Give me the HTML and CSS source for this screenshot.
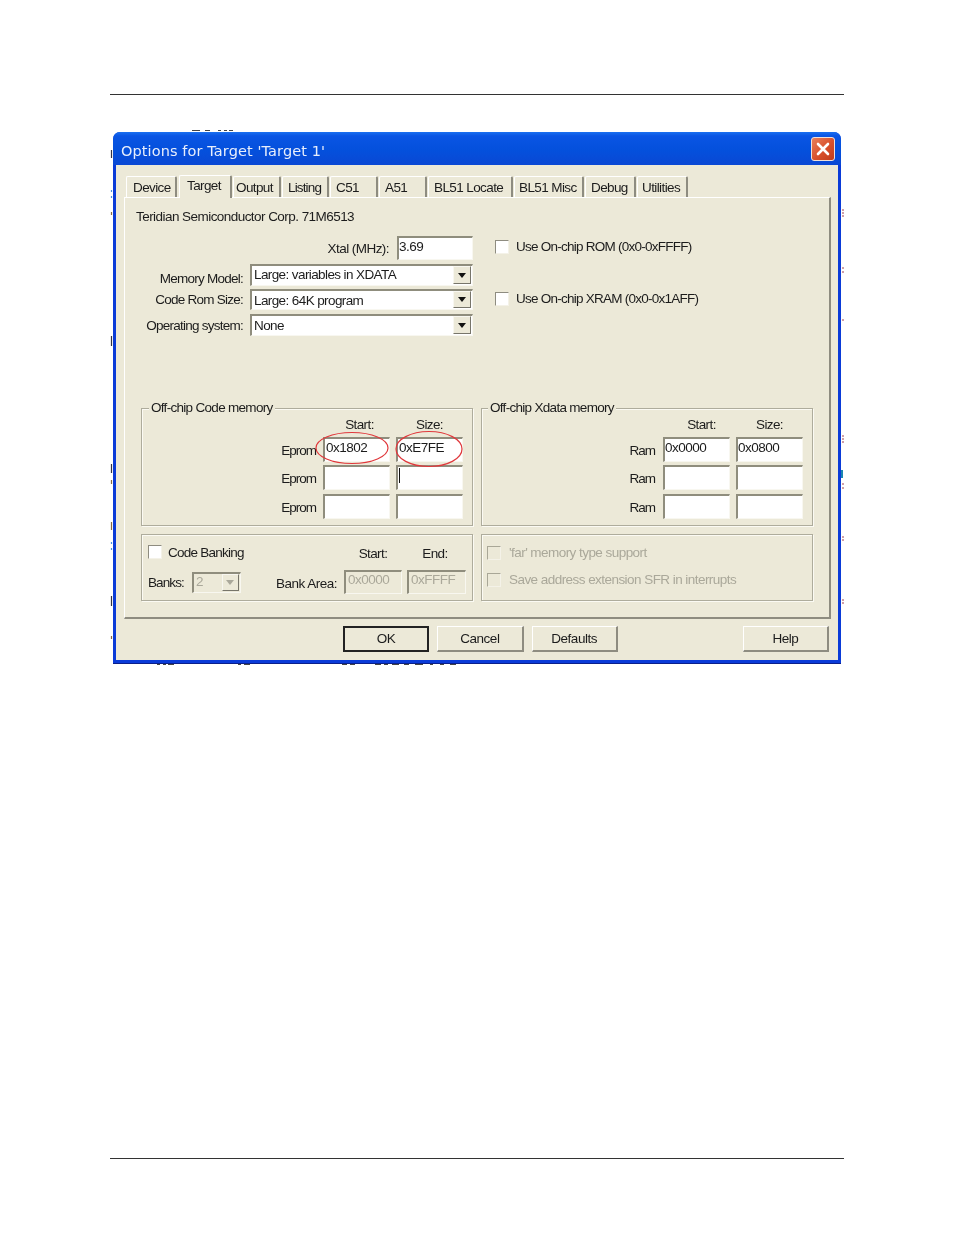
FILE: index.html
```html
<!DOCTYPE html>
<html lang="en">
<head>
<meta charset="utf-8">
<title>Options for Target</title>
<link rel="stylesheet" href="styles.css">
</head>
<body>
<div class="page">
  <div class="rule"></div>
  <svg class="specks" width="954" height="700" viewBox="0 0 954 700">
    <path d="M192 130.5h8M205 130.5h5M218 130.5h3M224 130.5h3M229 130.5h4M157 664.5h3M163 664.5h3M168 664.5h6M238 664.5h3M244 664.5h6M342 664.5h5M350 664.5h5M375 664.5h6M384 664.5h4M392 664.5h7M404 664.5h5M415 664.5h8M430 664.5h3M440 664.5h4M450 664.5h6" stroke="#444" stroke-width="1.2" fill="none"/>
    <path d="M111.500 150v8M111.500 336v10M111.500 596v10M111.500 464v9" stroke="#334" stroke-width="1.200" fill="none"/>
    <path d="M111.500 212v3M111.500 480v4M111.500 522v8M111.500 636v3" stroke="#8a6a40" stroke-width="1.200" fill="none"/>
    <path d="M111.500 190v2M111.500 196v2M111.500 542v2M111.500 548v2" stroke="#4a90e0" stroke-width="1.200" fill="none"/>
    <path d="M842 210h2M842 213h2M842 216h2M842 268h2M842 272h2M842 320h2M842 436h2M842 439h2M842 442h2M842 484h2M842 488h2M842 537h2M842 540h2M842 600h2M842 603h2" stroke="#a04050" stroke-width="1" fill="none"/>
    <path d="M842 470v8" stroke="#1a86b0" stroke-width="2" fill="none"/>
  </svg>
  <div class="dialog">
    <div class="titlebar">
      <span class="title">Options for Target 'Target 1'</span>
      <span class="close"><svg width="18" height="18" viewBox="0 0 18 18"><path d="M4 4L14 14M14 4L4 14" stroke="#fff" stroke-width="2.6" stroke-linecap="round"/></svg></span>
    </div>
    <div class="client">
      <div class="tabs">
        <span class="tab w-device">Device</span>
        <span class="tab active w-target">Target</span>
        <span class="tab w-output">Output</span>
        <span class="tab w-listing">Listing</span>
        <span class="tab w-c51">C51</span>
        <span class="tab w-a51">A51</span>
        <span class="tab w-locate">BL51 Locate</span>
        <span class="tab w-misc">BL51 Misc</span>
        <span class="tab w-debug">Debug</span>
        <span class="tab w-util">Utilities</span>
      </div>
      <div class="panel">
        <div class="device">Teridian Semiconductor Corp. 71M6513</div>
        <div class="top">
          <div class="top-left">
            <div class="row row-xtal"><label class="lab lab-xtal">Xtal (MHz):</label><div class="edit edit-xtal">3.69</div></div>
            <div class="row row-mem"><label class="lab lab-mem">Memory Model:</label><div class="combo">Large: variables in XDATA<span class="drop"><i></i></span></div></div>
            <div class="row row-rom"><label class="lab">Code Rom Size:</label><div class="combo combo-low">Large: 64K program<span class="drop"><i></i></span></div></div>
            <div class="row row-os"><label class="lab">Operating system:</label><div class="combo combo-low">None<span class="drop"><i></i></span></div></div>
          </div>
          <div class="top-right">
            <div class="check"><span class="box"></span>Use On-chip ROM (0x0-0xFFFF)</div>
            <div class="check check-2"><span class="box"></span>Use On-chip XRAM (0x0-0x1AFF)</div>
          </div>
        </div>
        <div class="groups">
          <div class="group mem-group">
            <span class="legend">Off-chip Code memory</span>
            <span></span><span class="head head-start">Start:</span><span class="head">Size:</span>
            <span class="rowlab">Eprom</span><div class="edit">0x1802</div><div class="edit">0xE7FE</div>
            <span class="rowlab">Eprom</span><div class="edit"></div><div class="edit"><span class="caret"></span></div>
            <span class="rowlab">Eprom</span><div class="edit"></div><div class="edit"></div>
            <svg class="marks" width="160" height="44" viewBox="0 0 160 44"><ellipse cx="37" cy="20" rx="36" ry="15.5" fill="none" stroke="#e0383c" stroke-width="1.2"/><ellipse cx="114" cy="21" rx="33" ry="17.500" fill="none" stroke="#e0383c" stroke-width="1.2"/></svg>
          </div>
          <div class="group mem-group xdata">
            <span class="legend">Off-chip Xdata memory</span>
            <span></span><span class="head head-start">Start:</span><span class="head">Size:</span>
            <span class="rowlab">Ram</span><div class="edit">0x0000</div><div class="edit">0x0800</div>
            <span class="rowlab">Ram</span><div class="edit"></div><div class="edit"></div>
            <span class="rowlab">Ram</span><div class="edit"></div><div class="edit"></div>
          </div>
          <div class="group bank-group">
            <div class="check bank-check"><span class="box"></span>Code Banking</div>
            <span></span>
            <span class="head head-low">Start:</span><span class="head head-low head-end">End:</span>
            <div class="banks">Banks:<div class="combo combo-off">2<span class="drop"><i></i></span></div></div>
            <span class="bank-area">Bank Area:</span>
            <div class="edit edit-off">0x0000</div><div class="edit edit-off edit-end">0xFFFF</div>
          </div>
          <div class="group far-group">
            <div class="check off"><span class="box box-off"></span>'far' memory type support</div>
            <div class="check off"><span class="box box-off"></span>Save address extension SFR in interrupts</div>
          </div>
        </div>
      </div>
      <div class="buttons">
        <button class="btn default">OK</button>
        <button class="btn">Cancel</button>
        <button class="btn">Defaults</button>
        <button class="btn help">Help</button>
      </div>
    </div>
  </div>
  <div class="rule rule-bottom"></div>
</div>
</body>
</html>
```
FILE: styles.css
```css
* { box-sizing: border-box; }
html, body { margin: 0; padding: 0; background: #fff; }
body { font-family: "Liberation Sans", Arial, sans-serif; font-size: 13.5px; color: #1c1c1c; }
.page { width: 954px; height: 1235px; padding: 94px 110px 0; position: relative; }
.rule { height: 1px; background: #333; }
.rule-bottom { margin-top: 494px; }
.specks { position: absolute; left: 0; top: 0; }

.dialog { width: 728px; height: 532px; margin: 37px 0 0 3px; border-radius: 7px 7px 0 0; overflow: hidden; background: #0a3bd8; padding: 0 3px 3px; border-bottom: 1px solid #0a1f8a; filter: blur(0.4px); position: relative; }
.titlebar { height: 33px; margin: 0 -3px; padding: 0 6px 0 8px; display: flex; align-items: center; justify-content: space-between; background: linear-gradient(#1a70f0 0, #0a55e4 12%, #0450dc 55%, #0a48d4 100%); }
.title { font-family: "DejaVu Sans", sans-serif; font-size: 14.5px; color: #e8eefc; letter-spacing: 0.1px; padding-top: 4px; }
.close { width: 24px; height: 24px; border-radius: 3px; border: 1px solid #f0e0d8; background: linear-gradient(135deg, #e8805c, #d8502c 55%, #c03c1c); display: flex; align-items: center; justify-content: center; }

.client { height: 495px; background: #ece9d8; padding: 10px 9px 0 8px; }
.tabs { display: flex; height: 22px; padding-left: 2px; align-items: flex-end; }
.tab { height: 21px; flex: none; padding: 3px 0 0 6px; background: #ece9d8; border-top: 1px solid #fff; border-left: 1px solid #fff; border-right: 2px solid #8e8c80; border-radius: 2px 2px 0 0; margin-right: 1px; white-space: nowrap; letter-spacing: -0.6px; }
.active { height: 23px; padding-top: 2px; margin-bottom: -1px; position: relative; z-index: 1; padding-left: 7px; }
.w-device { width: 51px; margin-right: 2px; }
.w-target { width: 53px; }
.w-output { width: 48px; padding-left: 2px; }
.w-listing { width: 47px; margin-right: 1px; padding-left: 5px; letter-spacing: -0.85px; }
.w-c51 { width: 48px; padding-left: 5px; }
.w-a51 { width: 48px; padding-left: 5px; }
.w-locate { width: 85px; padding-left: 5px; }
.w-misc { width: 70px; padding-left: 4px; }
.w-debug { width: 51px; padding-left: 5px; }
.w-util { width: 51px; padding-left: 4px; }

.panel { height: 422px; width: 707px; border-top: 1px solid #fff; border-left: 1px solid #fff; border-right: 2px solid #8e8c80; border-bottom: 2px solid #8e8c80; padding: 10px 0 0 11px; }
.device { height: 17px; line-height: 17px; letter-spacing: -0.55px; }

.top { display: flex; height: 172px; margin-top: 11px; }
.top-left { width: 337px; display: flex; flex-direction: column; }
.row { display: flex; justify-content: flex-end; align-items: center; gap: 7px; height: 22px; margin-bottom: 3px; }
.row-xtal { height: 24px; margin-bottom: 4px; gap: 8px; }
.row-rom { height: 21px; margin-bottom: 4px; }
.lab { letter-spacing: -0.75px; white-space: nowrap; }
.lab-xtal { padding-top: 1px; letter-spacing: -0.55px; }
.lab-mem { padding-top: 6px; }
.top-right { margin-left: 22px; display: flex; flex-direction: column; padding-top: 2px; }
.check { display: flex; align-items: center; gap: 7px; height: 17px; letter-spacing: -0.75px; white-space: nowrap; }
.check-2 { margin-top: 35px; }
.box { width: 14px; height: 14px; flex: none; background: #fff; border-top: 1px solid #8e8c80; border-left: 1px solid #8e8c80; border-right: 1px solid #f4f2e8; border-bottom: 1px solid #f4f2e8; }
.box-off { background: #ece9d8; }

.edit { height: 25px; background: #fff; border-top: 2px solid #8f8d7d; border-left: 2px solid #8f8d7d; border-right: 1px solid #f8f7f0; border-bottom: 1px solid #f8f7f0; padding-left: 1px; line-height: 18px; letter-spacing: -0.5px; position: relative; }
.edit-xtal { width: 76px; height: 24px; padding-left: 0; }
.xdata .edit { padding-left: 0; }
.caret { display: block; width: 1px; height: 15px; margin-top: 1px; background: #111; }
.combo { width: 223px; height: 100%; background: #fff; border-top: 2px solid #8f8d7d; border-left: 2px solid #8f8d7d; border-right: 1px solid #f8f7f0; border-bottom: 1px solid #f8f7f0; padding-left: 2px; line-height: 18px; letter-spacing: -0.6px; display: flex; justify-content: space-between; white-space: nowrap; }
.combo-low { line-height: 20px; }
.drop { width: 18px; margin: 0 1px 1px 0; flex: none; background: #ece9d8; border-top: 1px solid #f8f7f0; border-left: 1px solid #f8f7f0; border-right: 1px solid #77756a; border-bottom: 1px solid #77756a; display: flex; align-items: center; justify-content: center; }
.drop i { width: 0; height: 0; border-left: 4.5px solid transparent; border-right: 4.5px solid transparent; border-top: 5px solid #111; }

.groups { display: grid; grid-template-columns: 332px 332px; column-gap: 8px; row-gap: 8px; margin-left: 5px; }
.group { border: 1px solid #aeac9c; box-shadow: 1px 1px 0 #fbfaf3, inset 1px 1px 0 #fbfaf3; position: relative; }
.legend { position: absolute; left: 7px; top: -9px; padding: 0 2px; background: #ece9d8; line-height: 16px; letter-spacing: -0.7px; white-space: nowrap; }
.xdata .legend { left: 6px; }
.mem-group { height: 118px; display: grid; grid-template-columns: 1fr 67px 67px; grid-template-rows: 17px 25px 25px 25px; column-gap: 6px; row-gap: 3.5px; padding: 7px 9px 0 0; align-items: center; }
.marks { position: absolute; left: 173px; top: 19px; overflow: visible; }
.head { text-align: center; letter-spacing: -0.6px; align-self: center; }
.head-start { padding-left: 6px; }
.xdata .head-start { padding-left: 10px; }
.rowlab { text-align: right; letter-spacing: -1px; padding-top: 2px; padding-right: 1px; }
.xdata .rowlab { padding-right: 2px; }
.bank-group { height: 67px; display: grid; grid-template-columns: 128px 68px 58px 64px; grid-template-rows: 26px 24px; row-gap: 5px; padding: 4px 0 0 6px; align-items: center; }
.bank-check { grid-column: 1 / 2; gap: 6px; }
.head-low { padding-top: 2px; padding-left: 0; }
.head-end { padding-left: 2px; }
.banks { display: flex; align-items: center; gap: 8px; height: 21px; margin-top: 1px; letter-spacing: -0.9px; }
.combo-off { width: 49px; height: 21px; background: #ece9d8; color: #aaa89a; line-height: 16px; }
.combo-off .drop { width: 17px; }
.combo-off .drop i { border-top-color: #aaa89a; }
.bank-area { padding-top: 3px; letter-spacing: -0.5px; white-space: nowrap; }
.edit-off { height: 24px; background: #ece9d8; color: #aaa89a; line-height: 16px; padding-left: 2px; }
.edit-end { width: 59px; justify-self: end; }
.far-group { height: 67px; padding: 9px 0 0 5px; display: flex; flex-direction: column; gap: 10px; }
.off { color: #aaa89a; letter-spacing: -0.55px; gap: 8px; }
.off .box { border-color: #a9a797 #f4f2e8 #f4f2e8 #a9a797; }

.buttons { display: flex; padding: 7px 0 0 219px; gap: 8px; }
.btn { width: 87px; height: 26px; padding: 0 0 1px; font: inherit; letter-spacing: -0.5px; color: #1c1c1c; background: #ece9d8; border: 0; border-top: 1px solid #fff; border-left: 1px solid #fff; border-right: 2px solid #8e8c80; border-bottom: 2px solid #8e8c80; }
.default { border: 2px solid #222; }
.help { margin-left: 117px; }
```
